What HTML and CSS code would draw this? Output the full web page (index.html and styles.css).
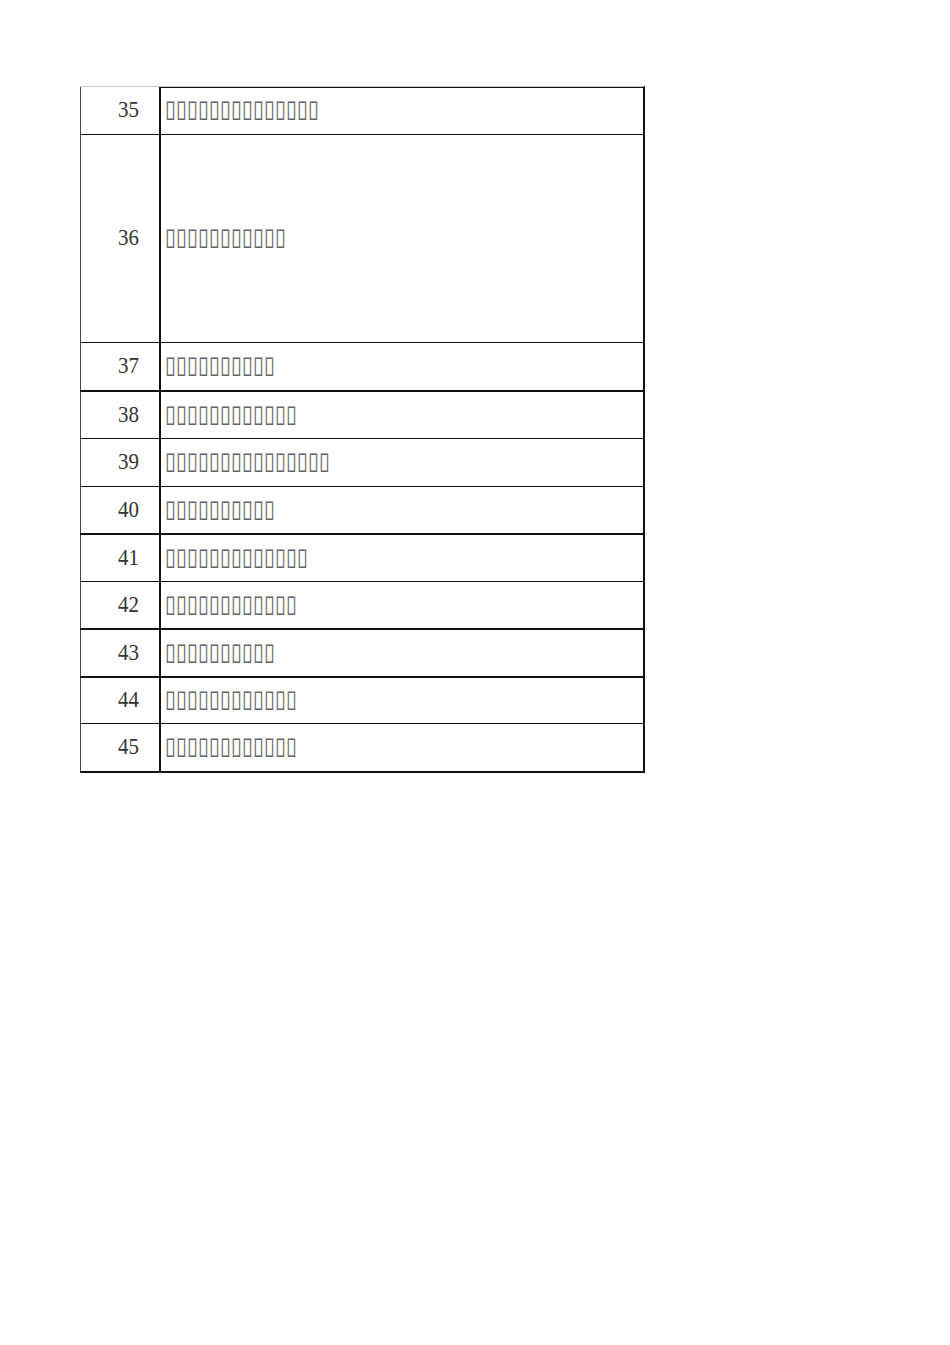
FILE: index.html
```html
<!DOCTYPE html>
<html lang="zh">
<head>
<meta charset="utf-8">
<title>Sheet</title>
<link rel="stylesheet" href="styles.css">
</head>
<body>
<div class="sheet">
  <div class="row h48 thin"><div class="num"><span>35</span></div><div class="txt"><span>▯▯▯▯▯▯▯▯▯▯▯▯▯▯</span></div></div>
  <div class="row h208 thin"><div class="num"><span>36</span></div><div class="txt"><span>▯▯▯▯▯▯▯▯▯▯▯</span></div></div>
  <div class="row h49 thick"><div class="num"><span>37</span></div><div class="txt"><span>▯▯▯▯▯▯▯▯▯▯</span></div></div>
  <div class="row h47 thin"><div class="num"><span>38</span></div><div class="txt"><span>▯▯▯▯▯▯▯▯▯▯▯▯</span></div></div>
  <div class="row h48 thin"><div class="num"><span>39</span></div><div class="txt"><span>▯▯▯▯▯▯▯▯▯▯▯▯▯▯▯</span></div></div>
  <div class="row h48 thick"><div class="num"><span>40</span></div><div class="txt"><span>▯▯▯▯▯▯▯▯▯▯</span></div></div>
  <div class="row h47 thin"><div class="num"><span>41</span></div><div class="txt"><span>▯▯▯▯▯▯▯▯▯▯▯▯▯</span></div></div>
  <div class="row h48 thick"><div class="num"><span>42</span></div><div class="txt"><span>▯▯▯▯▯▯▯▯▯▯▯▯</span></div></div>
  <div class="row h48 thick"><div class="num"><span>43</span></div><div class="txt"><span>▯▯▯▯▯▯▯▯▯▯</span></div></div>
  <div class="row h46 thin"><div class="num"><span>44</span></div><div class="txt"><span>▯▯▯▯▯▯▯▯▯▯▯▯</span></div></div>
  <div class="row h49 thick"><div class="num"><span>45</span></div><div class="txt"><span>▯▯▯▯▯▯▯▯▯▯▯▯</span></div></div>
</div>
</body>
</html>
```

FILE: styles.css
```css
* { box-sizing: border-box; }
html, body { margin: 0; padding: 0; background: #fff; }
body { font-family: "Liberation Serif", serif; }

.sheet {
  margin: 86px 0 0 80px;
  width: 565px;
  border-top: 1px solid #c8c8c8;
  border-right: 2px solid #111;
}

.row {
  display: grid;
  grid-template-columns: 81px 1fr;
  border-bottom: 1px solid #111;
}
.row.thick { border-bottom-width: 2px; }

.h46 { height: 46px; }
.h47 { height: 47px; }
.h48 { height: 48px; }
.h49 { height: 49px; }
.h208 { height: 208px; }

.num {
  border-left: 1px solid #444;
  border-right: 2px solid #111;
  display: flex;
  align-items: center;
  justify-content: flex-end;
  padding-right: 20px;
  padding-bottom: 3px;
  font-size: 22px;
  color: #333;
}
.num span {
  display: inline-block;
  transform: scale(0.95, 1.08);
  transform-origin: right center;
}

.txt {
  display: flex;
  align-items: center;
  padding-left: 4px;
  padding-bottom: 3px;
  font-family: "DejaVu Sans", sans-serif;
  font-size: 20px;
  color: #666;
  white-space: nowrap;
}
.txt span {
  display: inline-block;
  transform: scaleY(1.2);
}

.row:first-child .txt { box-shadow: inset 0 1px 0 #111; }
```
